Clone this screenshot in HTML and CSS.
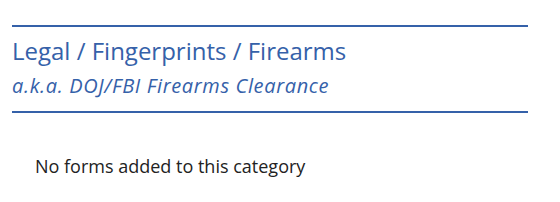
FILE: index.html
```html
<!DOCTYPE html>
<html lang="en">
<head>
  <meta charset="UTF-8" />
  <title>Forms</title>
  <link rel="stylesheet" href="styles.css">
</head>
<body>
  <div class="category">
    <div class="category-header">
      <h2 class="category-title">Legal / Fingerprints / Firearms</h2>
      <div class="category-aka">a.k.a. DOJ/FBI Firearms Clearance</div>
    </div>
    <p class="empty">No forms added to this category</p>
  </div>
</body>
</html>
```

FILE: styles.css
```css
body {
  font-family: "Open Sans", sans-serif;
  margin: 0;
  padding: 0;
  background: #fff;
  color: #222;
}
.category {
  width: 516px;
  margin: 25px 0 0 12px;
}
.category-header {
  border-top: 2px solid #3561a9;
  border-bottom: 2px solid #3561a9;
  padding: 8px 0 10px;
  color: #3561a9;
}
.category-title {
  margin: 0;
  font-size: 24px;
  font-weight: normal;
  line-height: 32px;
}
.category-aka {
  margin-top: 4px;
  font-style: italic;
  font-size: 20px;
  line-height: 30px;
  letter-spacing: 0.65px;
}
.empty {
  margin: 41px 0 0 23px;
  font-size: 18px;
  line-height: 24px;
}
```
